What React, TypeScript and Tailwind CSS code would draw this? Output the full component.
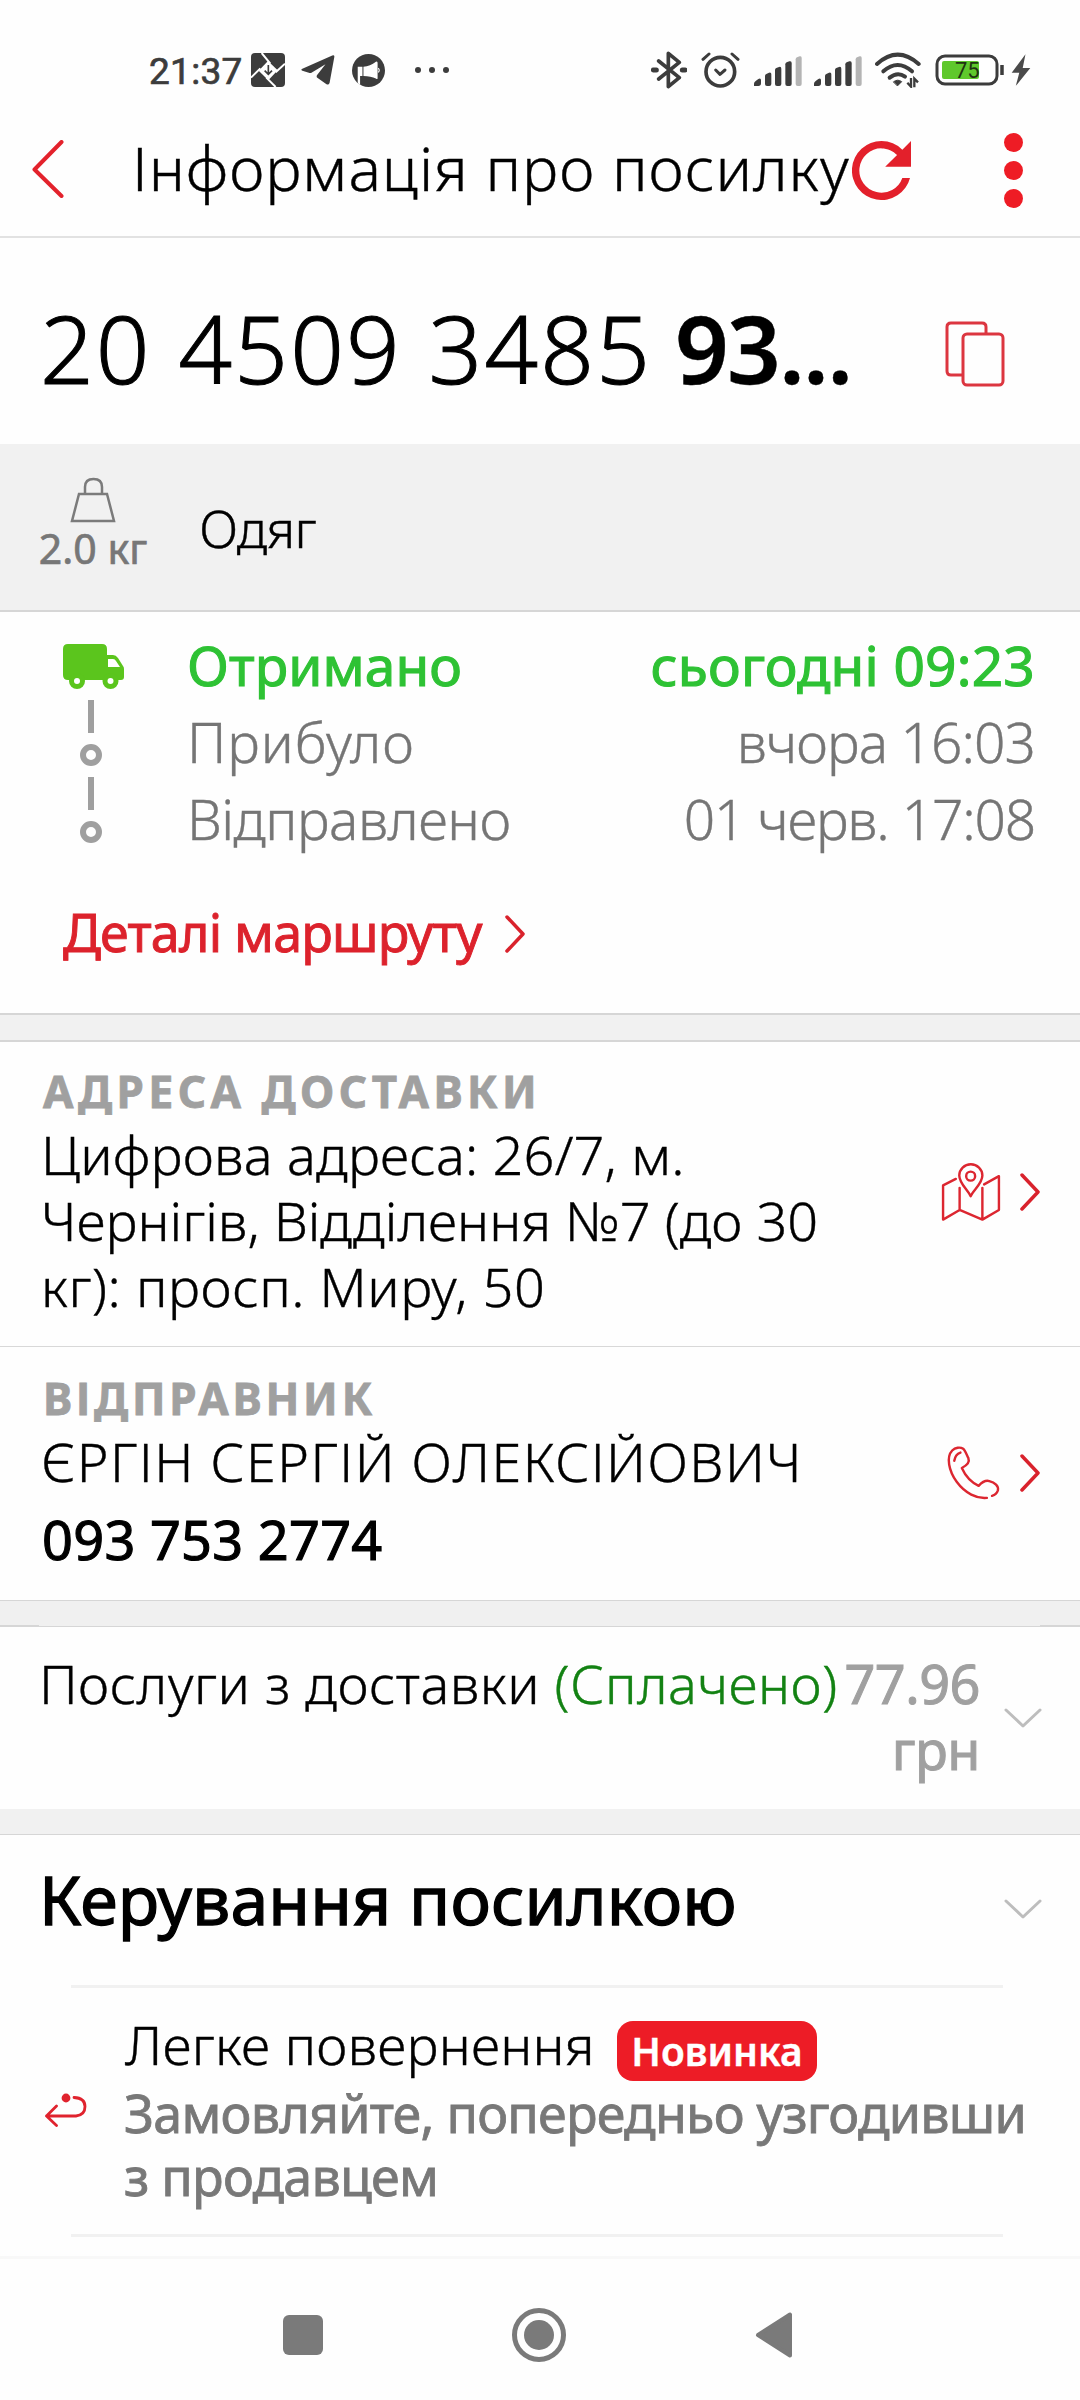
import React from 'react';

interface TrackingStep {
    label: string;
    time: string;
    active?: boolean;
    labelClass: string;
    timeClass: string;
}

const steps: TrackingStep[] = [
    { label: 'Отримано', time: 'сьогодні 09:23', active: true, labelClass: 'tracking-[0.1px]', timeClass: 'tracking-[0.2px]' },
    { label: 'Прибуло', time: 'вчора 16:03', labelClass: 'tracking-[0.9px]', timeClass: 'tracking-[-0.9px]' },
    { label: 'Відправлено', time: '01 черв. 17:08', labelClass: 'tracking-[-0.5px]', timeClass: 'tracking-[-1.15px]' },
];

const SignalIcon: React.FC = () => (
    <svg width="48" height="30" viewBox="0 0 144 90" fill="#3c3c3c">
        <path d="M0 90V83Q0 78 5 75L13 69Q21 65 21 73V82Q21 90 13 90Z" />
        <path d="M33 60Q33 56 37 54L45 50Q52 48 52 55V84Q52 90 46 90H39Q33 90 33 84Z" />
        <path d="M63 42Q63 38 67 36L75 33Q82 31 82 38V84Q82 90 76 90H69Q63 90 63 84Z" />
        <path d="M94 25Q94 21 98 19L106 16Q113 14 113 21V84Q113 90 107 90H100Q94 90 94 84Z" />
        <path fill="#b4b4b4" d="M125 10Q125 6 129 4L137 1Q143 -1 143 6V84Q143 90 137 90H131Q125 90 125 84Z" />
    </svg>
);

const StatusBar: React.FC = () => (
    <div className="flex items-center h-[100px] pt-10 pl-[149px] pr-[49px]">
        <span className="w-[102px] pt-[3px] shrink-0 font-['Roboto',sans-serif] font-normal [-webkit-text-stroke:0.7px] text-[37px] leading-none tracking-[0.3px] text-[#3c3c3c]">21:37</span>
        <svg className="shrink-0" width="34" height="34" viewBox="0 0 102 102">
            <rect width="102" height="102" rx="12" fill="#3c3c3c" />
            <path d="M51 24L80 52L52 82L23 53Z" fill="#fff" />
            <path d="M32 0L58 32M102 32L74 58M74 102L46 74M0 74L28 46" stroke="#fff" strokeWidth="6" />
            <path d="M52 36V64M41 53L52 64L63 53" fill="none" stroke="#3c3c3c" strokeWidth="5" />
        </svg>
        <svg className="ml-4 shrink-0" width="34" height="30" viewBox="0 0 100 88">
            <path d="M4 40L92 1Q99 -1 98 6L84 82Q81 90 74 85L48 67Q44 63 48 58L72 27L32 51Q28 54 23 52L4 46Q-2 43 4 40Z" fill="#3c3c3c" />
        </svg>
        <svg className="ml-[17px] shrink-0" width="33" height="33" viewBox="0 0 98 98">
            <circle cx="49" cy="49" r="49" fill="#3c3c3c" />
            <path d="M17 38H31V65H24V92L17 86Z" fill="#fff" />
            <path d="M34 38Q54 36 71 23Q76 20 76 27V71Q76 77 71 73Q56 65 34 65Z" fill="#fff" />
            <path d="M78 42Q84 48 78 55" fill="none" stroke="#fff" strokeWidth="3" />
        </svg>
        <svg className="ml-[30px] shrink-0" width="34" height="6" viewBox="0 0 34 6" fill="#3c3c3c">
            <circle cx="3" cy="3" r="3" />
            <circle cx="17" cy="3" r="3" />
            <circle cx="31" cy="3" r="3" />
        </svg>
        <div className="flex items-center ml-auto">
            <svg width="36" height="38" viewBox="0 0 108 114" fill="none" stroke="#3c3c3c" strokeWidth="11" strokeLinecap="round" strokeLinejoin="round">
                <path d="M23 30L85 80L52 107V7L85 34L23 84" />
                <path d="M7 57H16M94 57H102" strokeWidth="15" />
            </svg>
            <svg className="ml-3.5" width="39" height="36" viewBox="0 0 117 108" fill="none" stroke="#3c3c3c" strokeWidth="11" strokeLinecap="round">
                <circle cx="58" cy="59" r="43" />
                <path d="M44 54L57 67L72 54" strokeWidth="9" strokeLinejoin="round" />
                <path d="M6 22L24 6M93 6L111 22" strokeWidth="9" />
            </svg>
            <div className="ml-3.5 pt-0.5"><SignalIcon /></div>
            <div className="ml-3 pt-0.5"><SignalIcon /></div>
            <svg className="ml-[13px]" width="46" height="36" viewBox="0 0 138 108" fill="none" stroke="#3c3c3c" strokeWidth="12" strokeLinecap="round">
                <path d="M6 36Q68 -20 131 36" />
                <path d="M25 58Q68 20 111 58" />
                <path d="M44 77Q68 58 90 74" />
                <path d="M56 89Q68 80 80 89L68 101Z" fill="#3c3c3c" stroke="#3c3c3c" strokeWidth="3" />
                <path d="M108 78V104L97 92M118 106V80L129 91" strokeWidth="7" strokeLinecap="butt" />
            </svg>
            <svg className="ml-3.5" width="70" height="32" viewBox="0 0 70 32">
                <rect x="2" y="2" width="60" height="28" rx="8" fill="#fff" stroke="#3c3c3c" strokeWidth="3" />
                <rect x="7" y="7" width="37" height="18" rx="2" fill="#5fc82c" />
                <text x="20" y="24" fontSize="22" fontFamily="Roboto, sans-serif" fill="#1f3312">75</text>
                <path d="M67 11V21" stroke="#3c3c3c" strokeWidth="3.5" />
            </svg>
            <svg className="ml-1.5" width="20" height="32" viewBox="0 0 58 92">
                <path d="M42 0L2 54H24L14 92L56 40H34Z" fill="#4a4a4a" />
            </svg>
        </div>
    </div>
);

const Header: React.FC = () => (
    <header className="flex items-center h-[138px] pl-8 border-b-2 border-[#e2e2e2]">
        <svg className="shrink-0 mt-0.5" width="32" height="58" viewBox="0 0 32 58" fill="none" stroke="#e3222c" strokeWidth="4" strokeLinecap="round" strokeLinejoin="round">
            <path d="M29.5 2L2.5 29.5L29.5 56" />
        </svg>
        <h1 className="w-[720px] ml-[68px] pb-0.5 shrink-0 whitespace-nowrap font-light text-[61px] leading-none tracking-[0.95px]">Інформація про посилку</h1>
        <svg className="shrink-0 mt-1" width="59" height="59" viewBox="4 4 16 16" fill="#e3202b">
            <path d="M17.65 6.35A7.96 7.96 0 0 0 12 4a8 8 0 1 0 7.73 10h-2.08A6 6 0 1 1 12 6c1.66 0 3.14.69 4.22 1.78L13 11h7V4l-2.35 2.35z" />
        </svg>
        <div className="flex flex-col gap-[9px] ml-[93px] pt-1">
            <span className="w-[19px] h-[19px] rounded-full bg-[#ee1c25]" />
            <span className="w-[19px] h-[19px] rounded-full bg-[#ee1c25]" />
            <span className="w-[19px] h-[19px] rounded-full bg-[#ee1c25]" />
        </div>
    </header>
);

const ChevronRight: React.FC<{ className?: string }> = ({ className }) => (
    <svg className={className} width="20" height="38" viewBox="0 0 20 38" fill="none" stroke="#d9222c" strokeWidth="3.5" strokeLinecap="round" strokeLinejoin="round">
        <path d="M2 2L18 19L2 36" />
    </svg>
);

const ChevronDown: React.FC<{ className?: string }> = ({ className }) => (
    <svg className={className} width="38" height="20" viewBox="0 0 38 20" fill="none" stroke="#bdbdbd" strokeWidth="3" strokeLinecap="round" strokeLinejoin="round">
        <path d="M2 2L19 18L36 2" />
    </svg>
);

const TruckIcon: React.FC = () => (
    <svg width="61" height="45" viewBox="0 0 61 45" fill="#5bc51d">
        <path d="M5 0H39Q44 0 44 5V11H50Q53 11 55 14L60 22Q61 23 61 25V33Q61 36 58 36H5Q0 36 0 31V5Q0 0 5 0Z" />
        <path d="M45 15H50Q52 15 53 17L57 23H45Z" fill="#fff" />
        <circle cx="14" cy="37" r="8" />
        <circle cx="47.5" cy="37" r="8" />
        <circle cx="14" cy="37" r="3" fill="#fff" />
        <circle cx="47.5" cy="37" r="3" fill="#fff" />
    </svg>
);

const MapIcon: React.FC = () => (
    <svg width="60" height="60" viewBox="1163 355 174 174" fill="none" stroke="#dc2630" strokeWidth="7" strokeLinejoin="round" strokeLinecap="round">
        <path d="M1249 454C1240 435 1216 417 1216 394A33 32 0 0 1 1283 394C1283 417 1258 435 1249 454Z" />
        <circle cx="1249" cy="396" r="13" />
        <path d="M1206 404L1169 423V522L1217 494L1283 522L1331 494V396L1288 420M1217 430V494M1283 430V522" />
    </svg>
);

const PhoneIcon: React.FC = () => (
    <svg width="55" height="56" viewBox="1180 1177 160 163" fill="none" stroke="#dc2630" strokeWidth="7" strokeLinejoin="round" strokeLinecap="round">
        <path d="M1299 1331C1270 1334 1236 1318 1211 1284C1188 1252 1180 1212 1198 1193C1207 1184 1221 1182 1230 1188C1236 1193 1240 1205 1245 1215C1250 1228 1242 1236 1226 1244C1235 1264 1254 1286 1275 1296C1285 1285 1295 1279 1306 1282C1322 1286 1334 1297 1331 1309C1328 1318 1321 1323 1314 1325" />
        <path d="M1204 1223C1206 1210 1213 1202 1222 1199" />
    </svg>
);

const SectionTitle: React.FC<{ children: React.ReactNode; className: string }> = ({ children, className }) => (
    <h3 className={`text-[44px] leading-[50px] font-bold text-[#a0a0a0] whitespace-nowrap [-webkit-text-stroke:0.8px] ${className}`}>{children}</h3>
);

const NavBar: React.FC = () => (
    <nav className="flex items-center h-[144px] pt-[11px] pl-[283px] border-t-3 border-[#f8f8f8]">
        <span className="w-10 h-10 rounded-[6px] bg-[#7a7a7a]" />
        <span className="flex items-center justify-center w-[54px] h-[54px] ml-[189px] rounded-full border-5 border-[#7a7a7a]">
            <span className="w-[30px] h-[30px] rounded-full bg-[#7a7a7a]" />
        </span>
        <svg className="ml-[189px]" width="38" height="46" viewBox="0 0 38 46">
            <path d="M35 2.5V43.5L3 23Z" fill="#7a7a7a" stroke="#7a7a7a" strokeWidth="4" strokeLinejoin="round" />
        </svg>
    </nav>
);

export default function App() {
    return (
        <div className="w-[1080px] h-[2400px] overflow-hidden flex flex-col bg-[#fefefe] text-black font-['Noto_Sans','Open_Sans',sans-serif] [-webkit-text-stroke:0.4px]">
            <StatusBar />
            <Header />

            {/* Tracking number */}
            <section className="flex items-center h-[206px] pt-3.5 pl-10 pr-[75px]">
                <div className="flex whitespace-nowrap text-[94px] leading-none">
                    <span className="w-[635px] font-light tracking-[2.2px] [-webkit-text-stroke:1px]">20 4509 3485</span>
                    <span className="font-semibold tracking-[-1.8px]">93...</span>
                </div>
                <svg className="ml-auto mt-3" width="60" height="66" viewBox="0 0 60 66" fill="none" stroke="#dc3640" strokeWidth="3">
                    <path d="M18 54H6Q2 54 2 50V6Q2 2 6 2H37Q41 2 41 6V13" />
                    <rect x="18" y="13" width="40" height="51" rx="4" />
                </svg>
            </section>

            {/* Parcel contents */}
            <section className="flex h-[168px] bg-[#f1f1f1] border-b-2 border-[#d6d6d6] pl-[39px]">
                <div className="flex flex-col items-center w-[108px] pt-[33px] text-[#777]">
                    <svg width="46" height="46" viewBox="0 0 46 46" fill="none" stroke="#7b7b7b" strokeWidth="2.5">
                        <path d="M9 17H37L44 44H2ZM15 17V10Q15 2 23.5 2Q32 2 32 10V17" />
                    </svg>
                    <span className="mt-[5px] whitespace-nowrap text-[41px] leading-none [-webkit-text-stroke:0.7px]">2.0 кг</span>
                </div>
                <span className="self-center ml-[52px] pt-0.5 font-light text-[52px] leading-none tracking-[-0.8px]">Одяг</span>
            </section>

            {/* Route history */}
            <section className="h-[401px] pt-3.5 pl-[63px] pr-[45px]">
                <div className="flex">
                    <div className="flex flex-col w-[124px] pt-[18px]">
                        <TruckIcon />
                        <span className="w-1.5 h-[33px] mt-[11px] ml-[25px] bg-[#9f9f9f]" />
                        <span className="w-[22px] h-[22px] mt-[11px] ml-[17px] rounded-full border-6 border-[#9f9f9f]" />
                        <span className="w-1.5 h-[33px] mt-[11px] ml-[25px] bg-[#9f9f9f]" />
                        <span className="w-[22px] h-[22px] mt-[11px] ml-[17px] rounded-full border-6 border-[#9f9f9f]" />
                    </div>
                    <ul className="flex-1">
                        {steps.map(step => (
                            <li
                                key={step.label}
                                className={`flex justify-between whitespace-nowrap text-[55px] leading-[77px] ${
                                    step.active ? 'font-normal text-[#2ec234] [-webkit-text-stroke:1.1px]' : 'font-light text-[#757575]'
                                }`}
                            >
                                <span className={step.labelClass}>{step.label}</span>
                                <span className={step.timeClass}>{step.time}</span>
                            </li>
                        ))}
                    </ul>
                </div>
                <a className="flex items-center mt-[45px] text-[#dc222c]">
                    <span className="w-[442px] whitespace-nowrap text-[52px] leading-[60px] tracking-[-0.8px] [-webkit-text-stroke:0.9px]">Деталі маршруту</span>
                    <ChevronRight className="mt-1" />
                </a>
            </section>

            <div className="h-[29px] bg-[#f1f1f1] border-y-2 border-[#d6d6d6]" />

            {/* Delivery address */}
            <section className="flex h-[305px] pl-[41px] pr-10 border-b border-[#d8d8d8]">
                <div className="w-[860px] pt-6">
                    <SectionTitle className="ml-0.5 tracking-[4.5px]">АДРЕСА ДОСТАВКИ</SectionTitle>
                    <p className="mt-[5px] whitespace-nowrap font-light text-[54px] leading-[66px]">
                        <span className="block tracking-[0.2px]">Цифрова адреса: 26/7, м.</span>
                        <span className="block">Чернігів, Відділення №7 (до 30</span>
                        <span className="block tracking-[0.55px]">кг): просп. Миру, 50</span>
                    </p>
                </div>
                <div className="flex items-center ml-auto gap-[19px] pb-1">
                    <MapIcon />
                    <ChevronRight />
                </div>
            </section>

            {/* Sender */}
            <section className="flex h-[253px] pl-[41px] pr-10">
                <div className="w-[860px] pt-[26px]">
                    <SectionTitle className="ml-0.5 tracking-[3.8px]">ВІДПРАВНИК</SectionTitle>
                    <p className="mt-[5px] whitespace-nowrap font-light text-[54px] leading-[66px] tracking-[1.45px]">ЄРГІН СЕРГІЙ ОЛЕКСІЙОВИЧ</p>
                    <p className="mt-1.5 ml-px text-[54px] leading-[78px] tracking-[0.3px] [-webkit-text-stroke:1.1px]">093 753 2774</p>
                </div>
                <div className="flex items-center ml-auto gap-[19px] pb-0.5">
                    <PhoneIcon />
                    <ChevronRight />
                </div>
            </section>

            <div className="flex justify-between items-end h-[27px] bg-[#f0f0f0] border-y border-[#d6d6d6]">
                <span className="w-[39px] h-px bg-[#d6d6d6]" />
                <span className="w-10 h-px bg-[#d6d6d6]" />
            </div>

            {/* Delivery services */}
            <section className="flex h-[182px] pt-[23px] pl-[39px] pr-[38px] text-[54px] leading-[66px]">
                <p className="w-[804px] shrink-0 whitespace-nowrap font-light tracking-[0.5px]">
                    Послуги з доставки <span className="text-[#138213]">(Сплачено)</span>
                </p>
                <p className="w-[137px] shrink-0 text-right text-[#a0a0a0] tracking-[-0.5px] [-webkit-text-stroke:1px]">77.96 грн</p>
                <ChevronDown className="ml-auto mt-[58px]" />
            </section>

            <div className="h-[26px] bg-[#f1f1f1] border-b border-[#d6d6d6]" />

            {/* Parcel management */}
            <section className="flex-1">
                <div className="flex items-center h-[150px] pt-6 pb-[46px] pl-[39px] pr-[38px]">
                    <h2 className="whitespace-nowrap text-[68px] leading-[80px] tracking-[0.1px] [-webkit-text-stroke:1.3px]">Керування посилкою</h2>
                    <ChevronDown className="ml-auto mt-[19px]" />
                </div>
                <div className="h-[3px] ml-[71px] mr-[77px] bg-[#f1f1f1]" />
                <div className="flex items-center h-[246px] pl-11">
                    <svg className="shrink-0 mb-[3px]" width="43" height="35" viewBox="0 0 43 35" fill="none" stroke="#e0232e" strokeWidth="2.8" strokeLinecap="round" strokeLinejoin="round">
                        <path d="M12.5 14L2.5 24L12.5 33.5M2.5 24H32Q41 23 41 14.5Q41 6 30 5.5" />
                        <circle cx="22" cy="6" r="3" fill="#e0232e" />
                    </svg>
                    <div className="ml-[37px] pb-1">
                        <div className="flex items-center h-[66px]">
                            <span className="w-[492px] ml-px whitespace-nowrap font-light text-[54px] leading-[66px] tracking-[0.2px]">Легке повернення</span>
                            <span className="flex items-center justify-center w-[200px] h-[60px] mt-3.5 pb-0.5 shrink-0 rounded-2xl bg-[#ed1c26] text-white font-semibold text-[39px] leading-none">Новинка</span>
                        </div>
                        <p className="mt-1 whitespace-nowrap text-[52px] leading-[63px] tracking-[-0.77px] text-[#787878] [-webkit-text-stroke:0.8px]">
                            Замовляйте, попередньо узгодивши
                            <br />з продавцем
                        </p>
                    </div>
                </div>
                <div className="h-[3px] ml-[71px] mr-[77px] bg-[#f1f1f1]" />
            </section>

            <NavBar />
        </div>
    );
}
